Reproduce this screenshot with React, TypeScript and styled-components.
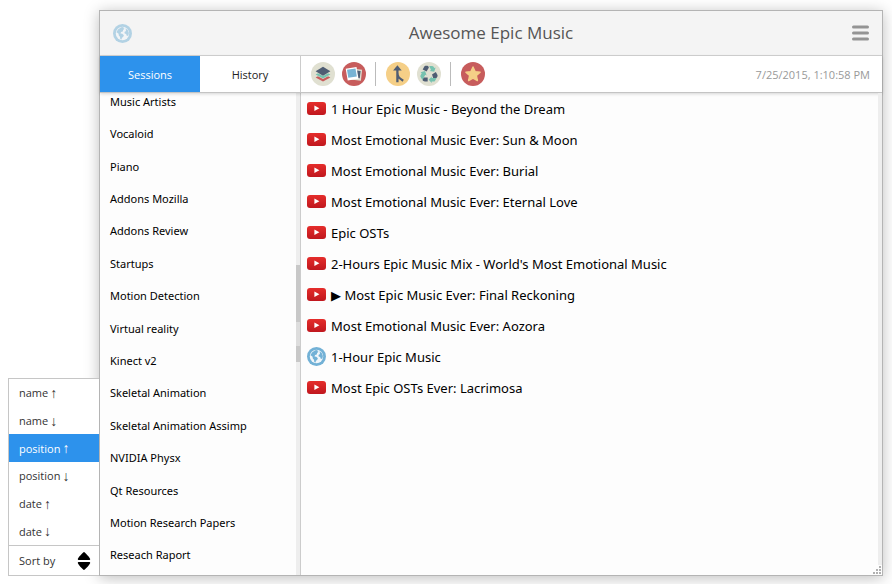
import React, { useState } from "react";
import styled, { createGlobalStyle } from "styled-components";

const GlobalStyle = createGlobalStyle`
  *, *::before, *::after { box-sizing: border-box; }
  body {
    margin: 0;
    background: #fff;
    color: #000;
    font-family: "Open Sans", "Noto Sans", "DejaVu Sans", sans-serif;
    font-size: 11px;
  }
  button { font: inherit; border: 0; margin: 0; background: none; cursor: pointer; }
  ul { list-style: none; margin: 0; padding: 0; }
`;

const Page = styled.div`
  display: flex;
  height: 100vh;
  padding: 10px 9px 8px 8px;
  overflow: hidden;
`;

const SortPanel = styled.aside`
  flex: none;
  align-self: flex-end;
  position: relative;
  z-index: 1;
  width: 91px;
  border: 1px solid #c6c6c6;
  border-right: 0;
  background: #fff;
`;

const SortList = styled.div`
  display: flex;
  flex-direction: column;
  height: 166px;
`;

const SortOption = styled.button<{ $active: boolean }>`
  flex: 1;
  display: flex;
  align-items: center;
  gap: 2px;
  padding: 0 10px;
  color: ${(p) => (p.$active ? "#fff" : "#333")};
  background: ${(p) => (p.$active ? "#2d92ec" : "#fff")};
`;

const Arrow = styled.span`
  font-family: "Liberation Sans", sans-serif;
  font-size: 14px;
  line-height: 14px;
`;

const SortToggle = styled.button`
  display: flex;
  align-items: center;
  justify-content: space-between;
  width: 100%;
  height: 30px;
  padding: 0 8px 0 10px;
  border-top: 1px solid #c6c6c6;
  color: #333;
`;

const Window = styled.main`
  flex: 1;
  min-width: 0;
  display: flex;
  flex-direction: column;
  border: 1px solid #b4b4b4;
  background: #fdfdfd;
  box-shadow: 0 2px 14px rgba(0, 0, 0, 0.26);
`;

const Header = styled.header`
  flex: none;
  display: grid;
  grid-template-columns: 1fr auto 1fr;
  align-items: center;
  height: 45px;
  padding: 0 13px;
  background: #f4f4f4;
  border-bottom: 1px solid #d2d2d2;
`;

const Title = styled.h1`
  margin: 0;
  font-size: 17px;
  line-height: 24px;
  font-weight: 400;
  color: #555;
`;

const FadedIcon = styled.span`
  display: flex;
  opacity: 0.5;
`;

const MenuButton = styled.button`
  justify-self: end;
  display: flex;
  padding: 0;
`;

const Bar = styled.div`
  flex: none;
  position: relative;
  display: flex;
  height: 37px;
  background: #fff;
  border-bottom: 1px solid #c4c4c4;
  box-shadow: 0 1px 3px rgba(0, 0, 0, 0.16);
`;

const Tabs = styled.div`
  flex: none;
  display: flex;
  width: 201px;
  border-right: 1px solid #ccc;
`;

const Tab = styled.button<{ $active: boolean }>`
  flex: 1;
  padding: 0;
  color: ${(p) => (p.$active ? "#fff" : "#222")};
  background: ${(p) => (p.$active ? "#2d92ec" : "#fff")};
`;

const Tools = styled.div`
  flex: 1;
  display: flex;
  align-items: center;
  padding: 0 12px 0 10px;
`;

const ToolGroup = styled.div`
  display: flex;
  gap: 7px;
  & + & {
    margin-left: 9px;
    padding-left: 10px;
    border-left: 1px solid #bbb;
  }
`;

const ToolButton = styled.button`
  display: flex;
  padding: 0;
`;

const Timestamp = styled.time`
  margin-left: auto;
  color: #999;
`;

const Body = styled.div`
  flex: 1;
  min-height: 0;
  display: flex;
`;

const Sidebar = styled.nav`
  flex: none;
  display: flex;
  width: 201px;
  border-right: 1px solid #ccc;
  overflow: hidden;
`;

const SessionList = styled.ul`
  flex: 1;
  display: flex;
  flex-direction: column;
  margin: -8px 0 4px;
`;

const SessionItem = styled.li`
  flex: 1;
  display: flex;
  align-items: center;
`;

const SessionLink = styled.a`
  padding-left: 10px;
  font-family: "Noto Sans", sans-serif;
  color: #000;
  text-decoration: none;
`;

const ScrollTrack = styled.div`
  flex: none;
  width: 4px;
  background: #eee;
`;

const ScrollThumb = styled.div`
  height: 97px;
  margin-top: 172px;
  background: linear-gradient(#c8c8c8 57px, #ddd 57px, #ddd 81px, #c8c8c8 81px);
`;

const Content = styled.section`
  flex: 1;
  min-width: 0;
  position: relative;
  display: flex;
`;

const TabList = styled.ul`
  flex: 1;
  padding: 0 6px;
`;

const TabItem = styled.li`
  display: flex;
  height: 31px;
`;

const TabLink = styled.a`
  display: flex;
  align-items: center;
  gap: 5px;
  font-family: "Noto Sans", "DejaVu Sans", sans-serif;
  font-size: 13px;
  color: #000;
  text-decoration: none;
  white-space: pre;
`;

const Grip = styled.svg`
  position: absolute;
  right: 0;
  bottom: 0;
  background: #fdfdfd;
`;

const GlobeIcon = ({ size = 19 }: { size?: number }) => (
  <svg width={size} height={size} viewBox="0 0 19 19" aria-hidden="true">
    <circle cx="9.5" cy="9.5" r="9.5" fill="#72b1d6" />
    <circle cx="9.5" cy="9.5" r="6.7" fill="#f1f6fa" />
    <path
      d="M3.4 8.2 5 5.4 8.2 3.2l2.6-.3-.6 1.2 1.3.7-1.4 1.3-.3 1.5-1.7.5-.6 1.4 1.8.2 1.6 1.5-.8 1.7-1.2.9-.3 1.8-1.3-.7-.3-2.2-1.2-1.3-.2-1.7-1.3-1z"
      fill="#72b1d6"
    />
    <path d="m12.6 4.2 2.3 2.1 1 2.6-.5 2.6-1.5.6-.8-2-1.4-.6-.2-1.6 1.5-1z" fill="#72b1d6" />
  </svg>
);

const VideoIcon = () => (
  <svg width="19" height="19" viewBox="0 0 19 19" aria-hidden="true">
    <defs>
      <linearGradient id="video" x1="0" y1="0" x2="0" y2="1">
        <stop offset="0" stopColor="#e52d2b" />
        <stop offset="1" stopColor="#c0171e" />
      </linearGradient>
    </defs>
    <rect y="3" width="19" height="13" rx="3" fill="url(#video)" />
    <path d="m7.4 6.5 5 2.800-5 2.800z" fill="#fff" />
  </svg>
);

const LayersIcon = () => (
  <svg width="24" height="24" viewBox="0 0 24 24" aria-hidden="true">
    <circle cx="12" cy="12" r="12" fill="#e0e0d1" />
    <path d="m4.600 15.400 7.400-4 7.400 4-7.400 4.100z" fill="#c75c5c" />
    <path d="m4.600 13 7.400-4 7.400 4-7.400 4.100z" fill="#e0e0d1" />
    <path d="m4.600 12.400 7.400-4 7.400 4-7.400 4.100z" fill="#76c2af" />
    <path d="m4.600 10 7.400-4 7.400 4-7.400 4.100z" fill="#e0e0d1" />
    <path d="m4.600 9.300 7.400-4.500 7.400 4.500-7.400 4.500z" fill="#4f5d73" />
  </svg>
);

const PhotosIcon = () => (
  <svg width="24" height="24" viewBox="0 0 24 24" aria-hidden="true">
    <circle cx="12" cy="12" r="12" fill="#c75c5c" />
    <path d="m9.5 6.5 10.6 1.3-1.2 10.9-10.400-1.300z" fill="#e0e0d1" />
    <path d="m11 8 7.600.9-.8 7.400-7.400-.9z" fill="#4f5d73" />
    <path d="m3.700 6.700 10.800-1.800 2 11.800L5.700 18.500z" fill="#fff" />
    <path d="m5 7.800 8.500-1.400 1.300 8-8.500 1.400z" fill="#77b3d4" />
  </svg>
);

const MergeIcon = () => (
  <svg width="24" height="24" viewBox="0 0 24 24" aria-hidden="true">
    <circle cx="12" cy="12" r="12" fill="#f5cf87" />
    <path d="M11.400 20.200V7M11.400 10.500c0 4.500 1.800 5.800 5.800 8.200" fill="none" stroke="#4f5d73" strokeWidth="2.3" />
    <path d="m7.100 8.400 4.300-5.200 4.300 5.200z" fill="#4f5d73" />
  </svg>
);

const RecycleIcon = () => (
  <svg width="24" height="24" viewBox="0 0 24 24" aria-hidden="true">
    <circle cx="12" cy="12" r="12" fill="#e0e0d1" />
    <path d="M7.500 4.200c1-.6 3-.5 3.800 0l.6 1.400-2.300 3.800-3.900-2z" fill="#4f5d73" />
    <path d="M12.200 4h3c1 0 1.500.8 2.200 1.900l1.200-.4-1.400 4.300-4.500-.9 1.300-.8z" fill="#76c2af" />
    <path d="m15 12.500 3.800-2.400 1.700 3c.4 1-.4 2.700-1.200 2.900h-3.100z" fill="#4f5d73" />
    <path d="m11.700 17.800 3-3.300v1.400h4.900l-1.500 2.800c-.4.600-.8.900-1.500.9h-1.900V21z" fill="#76c2af" />
    <path d="M6.600 15.600h4.100v4H7.800c-1 0-2-.8-2.300-1.500z" fill="#4f5d73" />
    <path d="m3.600 10.200 4.500-1.100 1.500 4.300-1.300-.6-2.900 5.300-1.800-3c-.4-.8-.2-1.400.2-2l.9-1.900z" fill="#76c2af" />
  </svg>
);

const StarIcon = () => (
  <svg width="24" height="24" viewBox="0 0 24 24" aria-hidden="true">
    <circle cx="12" cy="12" r="12" fill="#c75c5c" />
    <path
      d="m12 5 2.100 4.600 5 .6-3.700 3.400 1 5L12 16.100l-4.400 2.500 1-5-3.700-3.400 5-.6z"
      fill="#f5cf87"
      stroke="#f5cf87"
      strokeWidth="1.4"
      strokeLinejoin="round"
    />
  </svg>
);

const toolGroups = [
  [
    { label: "Sessions", icon: <LayersIcon /> },
    { label: "Windows", icon: <PhotosIcon /> },
  ],
  [
    { label: "Merge", icon: <MergeIcon /> },
    { label: "Replace", icon: <RecycleIcon /> },
  ],
  [{ label: "Bookmark", icon: <StarIcon /> }],
];

const sortOptions = [
  ["name", "↑"],
  ["name", "↓"],
  ["position", "↑"],
  ["position", "↓"],
  ["date", "↑"],
  ["date", "↓"],
];

const sessions = [
  "Music Artists",
  "Vocaloid",
  "Piano",
  "Addons Mozilla",
  "Addons Review",
  "Startups",
  "Motion Detection",
  "Virtual reality",
  "Kinect v2",
  "Skeletal Animation",
  "Skeletal Animation Assimp",
  "NVIDIA Physx",
  "Qt Resources",
  "Motion Research Papers",
  "Reseach Raport",
];

const tabs = [
  { title: "1 Hour Epic Music - Beyond the Dream" },
  { title: "Most Emotional Music Ever: Sun & Moon" },
  { title: "Most Emotional Music Ever: Burial" },
  { title: "Most Emotional Music Ever: Eternal Love" },
  { title: "Epic OSTs" },
  { title: "2-Hours Epic Music Mix - World's Most Emotional Music" },
  { title: "▶ Most Epic Music Ever: Final Reckoning" },
  { title: "Most Emotional Music Ever: Aozora" },
  { title: "1-Hour Epic Music", web: true },
  { title: "Most Epic OSTs Ever: Lacrimosa" },
];

const gripDots = [
  [9, 1],
  [6, 4],
  [9, 4],
  [3, 7],
  [6, 7],
  [9, 7],
];

export default function App() {
  const [sort, setSort] = useState(2);
  const [view, setView] = useState("Sessions");

  return (
    <>
      <GlobalStyle />
      <Page>
        <SortPanel>
          <SortList role="group" aria-label="Sort by">
            {sortOptions.map(([name, arrow], i) => (
              <SortOption key={i} $active={i === sort} aria-pressed={i === sort} onClick={() => setSort(i)}>
                {name}
                <Arrow>{arrow}</Arrow>
              </SortOption>
            ))}
          </SortList>
          <SortToggle>
            Sort by
            <svg width="14" height="18" viewBox="0 0 14 18" aria-hidden="true">
              <path d="M7 0c.8 0 6.2 6 6.2 7 0 .7-.4 1-1 1H1.800c-.6 0-1-.3-1-1C.8 6 6.200 0 7 0zM7 18c.8 0 6.2-6 6.2-7 0-.7-.4-1-1-1H1.800c-.6 0-1 .3-1 1C.8 12 6.200 18 7 18z" />
            </svg>
          </SortToggle>
        </SortPanel>
        <Window>
          <Header>
            <FadedIcon>
              <GlobeIcon />
            </FadedIcon>
            <Title>Awesome Epic Music</Title>
            <MenuButton aria-label="Menu">
              <svg width="17" height="16" viewBox="0 0 17 16" aria-hidden="true">
                <path d="M1.500 2h14M1.500 8h14M1.500 14h14" stroke="#949494" strokeWidth="3" strokeLinecap="round" />
              </svg>
            </MenuButton>
          </Header>
          <Bar>
            <Tabs role="tablist">
              {["Sessions", "History"].map((name) => (
                <Tab
                  key={name}
                  role="tab"
                  aria-selected={view === name}
                  $active={view === name}
                  onClick={() => setView(name)}
                >
                  {name}
                </Tab>
              ))}
            </Tabs>
            <Tools>
              {toolGroups.map((group, i) => (
                <ToolGroup key={i}>
                  {group.map((tool) => (
                    <ToolButton key={tool.label} aria-label={tool.label}>
                      {tool.icon}
                    </ToolButton>
                  ))}
                </ToolGroup>
              ))}
              <Timestamp>7/25/2015, 1:10:58 PM</Timestamp>
            </Tools>
          </Bar>
          <Body>
            <Sidebar>
              <SessionList>
                {sessions.map((name) => (
                  <SessionItem key={name}>
                    <SessionLink href="#">{name}</SessionLink>
                  </SessionItem>
                ))}
              </SessionList>
              <ScrollTrack>
                <ScrollThumb />
              </ScrollTrack>
            </Sidebar>
            <Content>
              <TabList>
                {tabs.map((tab) => (
                  <TabItem key={tab.title}>
                    <TabLink href="#">
                      {tab.web ? <GlobeIcon /> : <VideoIcon />}
                      {tab.title}
                    </TabLink>
                  </TabItem>
                ))}
              </TabList>
              <ScrollTrack />
              <Grip width="12" height="10" viewBox="0 0 12 10" aria-hidden="true">
                {gripDots.map(([x, y]) => (
                  <rect key={`${x}-${y}`} x={x} y={y} width="2" height="2" fill="#b0b0b0" />
                ))}
              </Grip>
            </Content>
          </Body>
        </Window>
      </Page>
    </>
  );
}
